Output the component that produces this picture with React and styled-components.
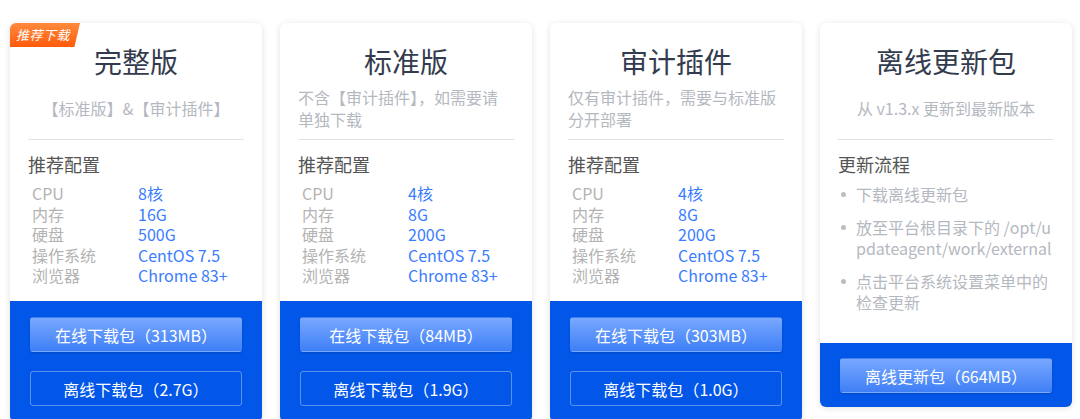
import React from 'react'
import styled, { createGlobalStyle } from 'styled-components'

const GlobalStyle = createGlobalStyle`
  body {
    margin: 0;
    background: #fff;
    font-family: "Noto Sans CJK SC", "Noto Sans", sans-serif;
  }
`

const Page = styled.div`
  display: flex;
  align-items: flex-start;
  gap: 18px;
  padding: 23px 7px 0 10px;
  height: 419px;
  box-sizing: border-box;
  overflow: hidden;
`

const Card = styled.div`
  position: relative;
  width: 252px;
  flex-shrink: 0;
  background: #fff;
  border-radius: 6px;
  box-shadow: 0 1px 6px rgba(0, 0, 0, 0.12);
  overflow: hidden;
  display: flex;
  flex-direction: column;
`

const Badge = styled.div`
  position: absolute;
  top: 0;
  left: 0;
  width: 70px;
  height: 24px;
  padding-left: 6px;
  box-sizing: border-box;
  background: linear-gradient(180deg, #ff8a3d, #ff5a0a);
  clip-path: polygon(0 0, 100% 0, 92% 100%, 0 100%);
  color: #fff;
  font-size: 13px;
  font-style: italic;
  line-height: 24px;
  letter-spacing: 0.5px;
`

const Body = styled.div`
  padding: 18px 18px 0;
`

const Title = styled.div`
  text-align: center;
  font-size: 28px;
  line-height: 40px;
  color: #333c4e;
`

const SubBox = styled.div`
  height: 54px;
  display: flex;
  align-items: center;
  justify-content: center;
`

const Sub = styled.div`
  width: ${p => (p.$wide ? '100%' : 'auto')};
  font-size: 16px;
  line-height: 22px;
  color: #b4b8c0;
  text-align: left;
`

const SubLine = styled.div`
  white-space: nowrap;
`

const Divider = styled.div`
  height: 1px;
  background: #e3e3e3;
  margin-top: 4px;
`

const Heading = styled.div`
  margin-top: 12px;
  font-size: 18px;
  line-height: 24px;
  color: #555;
`

const Specs = styled.div`
  display: grid;
  grid-template-columns: 106px 1fr;
  row-gap: 0.5px;
  margin: 7px 0 0 4px;
  padding-bottom: 16px;
  font-size: 16px;
  line-height: 20px;
`

const Label = styled.div`
  color: #b3b3b3;
`

const Value = styled.div`
  color: #3a7cff;
`

const Steps = styled.ul`
  list-style: none;
  margin: 8px 0 0;
  padding: 0 0 30px;
  display: flex;
  flex-direction: column;
  gap: 12px;
`

const Step = styled.li`
  position: relative;
  padding-left: 18px;
  font-size: 16px;
  line-height: 21px;
  color: #b4b8c0;
  word-break: break-all;

  &::before {
    content: '';
    position: absolute;
    left: 3px;
    top: 8px;
    width: 5px;
    height: 5px;
    border-radius: 50%;
    background: #b9bdc4;
  }
`

const Footer = styled.div`
  background: #0256e8;
  padding: ${p => (p.$single ? '15px 20px 14px' : '16px 20px')};
  display: flex;
  flex-direction: column;
  gap: 19px;
`

const Button = styled.div`
  height: 35px;
  border-radius: 3px;
  box-sizing: border-box;
  display: flex;
  align-items: center;
  justify-content: center;
  color: #fff;
  font-size: 16px;
  background: ${p =>
    p.$outline ? 'transparent' : 'linear-gradient(180deg, #78a8ff, #3f7ff6)'};
  border: 1px solid
    ${p => (p.$outline ? 'rgba(255, 255, 255, 0.35)' : 'transparent')};
  box-shadow: ${p => (p.$outline ? 'none' : '0 1px 2px rgba(0, 0, 0, 0.15)')};
`

const packages = [
  {
    title: '完整版',
    sub: ['【标准版】&【审计插件】'],
    badge: true,
    specs: ['8核', '16G', '500G', 'CentOS 7.5', 'Chrome 83+'],
    online: '313MB',
    offline: '2.7G',
  },
  {
    title: '标准版',
    sub: ['不含【审计插件】，如需要请', '单独下载'],
    specs: ['4核', '8G', '200G', 'CentOS 7.5', 'Chrome 83+'],
    online: '84MB',
    offline: '1.9G',
  },
  {
    title: '审计插件',
    sub: ['仅有审计插件，需要与标准版', '分开部署'],
    specs: ['4核', '8G', '200G', 'CentOS 7.5', 'Chrome 83+'],
    online: '303MB',
    offline: '1.0G',
  },
]

const labels = ['CPU', '内存', '硬盘', '操作系统', '浏览器']

const steps = [
  '下载离线更新包',
  '放至平台根目录下的 /opt/updateagent/work/external',
  '点击平台系统设置菜单中的检查更新',
]

export default function App() {
  return (
    <>
      <GlobalStyle />
      <Page>
        {packages.map(pkg => (
          <Card key={pkg.title}>
            {pkg.badge && <Badge>推荐下载</Badge>}
            <Body>
              <Title>{pkg.title}</Title>
              <SubBox>
                <Sub $wide={pkg.sub.length > 1}>
                  {pkg.sub.map(line => (
                    <SubLine key={line}>{line}</SubLine>
                  ))}
                </Sub>
              </SubBox>
              <Divider />
              <Heading>推荐配置</Heading>
              <Specs>
                {labels.map((label, i) => (
                  <React.Fragment key={label}>
                    <Label>{label}</Label>
                    <Value>{pkg.specs[i]}</Value>
                  </React.Fragment>
                ))}
              </Specs>
            </Body>
            <Footer>
              <Button>在线下载包（{pkg.online}）</Button>
              <Button $outline>离线下载包（{pkg.offline}）</Button>
            </Footer>
          </Card>
        ))}
        <Card>
          <Body>
            <Title>离线更新包</Title>
            <SubBox>
              <Sub>
                <SubLine>从 v1.3.x 更新到最新版本</SubLine>
              </Sub>
            </SubBox>
            <Divider />
            <Heading>更新流程</Heading>
            <Steps>
              {steps.map(s => (
                <Step key={s}>{s}</Step>
              ))}
            </Steps>
          </Body>
          <Footer $single>
            <Button>离线更新包（664MB）</Button>
          </Footer>
        </Card>
      </Page>
    </>
  )
}
